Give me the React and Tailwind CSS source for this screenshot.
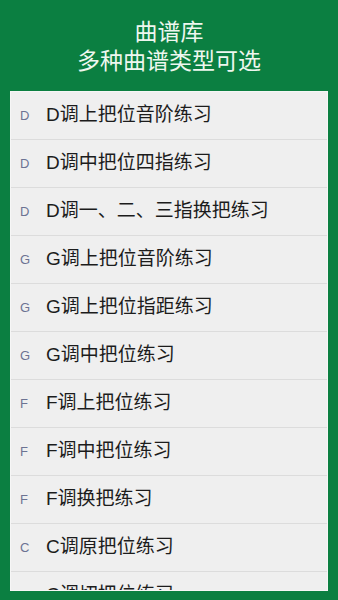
import React from 'react';

const songs = [
  { key: 'D', title: 'D调上把位音阶练习' },
  { key: 'D', title: 'D调中把位四指练习' },
  { key: 'D', title: 'D调一、二、三指换把练习' },
  { key: 'G', title: 'G调上把位音阶练习' },
  { key: 'G', title: 'G调上把位指距练习' },
  { key: 'G', title: 'G调中把位练习' },
  { key: 'F', title: 'F调上把位练习' },
  { key: 'F', title: 'F调中把位练习' },
  { key: 'F', title: 'F调换把练习' },
  { key: 'C', title: 'C调原把位练习' },
  { key: 'C', title: 'C调切把位练习' },
];

export default function App() {
  return (
    <div
      className="h-[600px] w-full overflow-hidden bg-[#0b7f41]"
      style={{ fontFamily: '"Liberation Sans", "Noto Sans CJK SC", sans-serif' }}
    >
      {/* header */}
      <div className="pt-[18px] text-center text-[23px] leading-[29px] text-[#eef7ef]">
        <p>曲谱库</p>
        <p>多种曲谱类型可选</p>
      </div>

      {/* song list */}
      <div className="mx-[10px] mt-[15px] h-[500px] overflow-hidden border border-[#f6f6f6] bg-[#efefef]">
        {songs.map((s, i) => (
          <div key={i} className="flex h-[48px] items-center border-b border-[#dcdcdc]">
            <span className="w-[35px] pl-[9px] text-[13px] text-[#6c7393]">{s.key}</span>
            <span className="text-[19px] text-[#1c1c1c]">{s.title}</span>
          </div>
        ))}
      </div>
    </div>
  );
}
